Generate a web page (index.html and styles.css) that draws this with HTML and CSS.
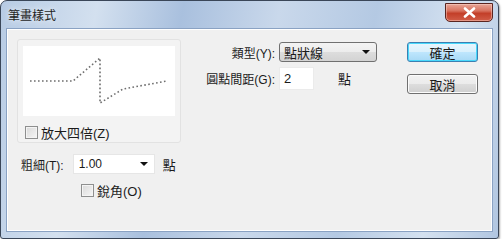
FILE: index.html
```html
<!DOCTYPE html>
<html>
<head>
    <title>筆畫樣式</title>
    <link rel="stylesheet" href="styles.css">
</head>
<body>
    <div class="window">
        <div class="titlebar">
            <span class="title">筆畫樣式</span>
            <button class="close-btn">
                <svg width="13" height="11" viewBox="0 0 13 11">
                    <path d="M2 1.5 L11 9.5 M11 1.5 L2 9.5" stroke="#fff" stroke-width="2.6" stroke-linecap="round"/>
                </svg>
            </button>
        </div>

        <div class="client">
            <!-- izquierda: vista previa y grosor -->
            <div class="left-col">
                <div class="preview-group">
                    <div class="preview-canvas">
                        <svg width="153" height="70" viewBox="0 0 153 70">
                            <polyline points="7,35 50,35 77,12 77,57 100,43 144,35"
                                fill="none" stroke="#6f6f6f" stroke-width="1.6"
                                stroke-dasharray="1.6 2.4"/>
                        </svg>
                    </div>
                    <label class="check-row">
                        <span class="checkbox"></span>放大四倍(Z)
                    </label>
                </div>

                <div class="width-row">
                    <span class="field-label">粗細(T):</span>
                    <div class="combo">
                        <span>1.00</span>
                        <span class="arrow"></span>
                    </div>
                    <span class="unit">點</span>
                </div>
                <label class="check-row sharp">
                    <span class="checkbox"></span>銳角(O)
                </label>
            </div>

            <!-- centro: tipo y distancia -->
            <div class="form-grid">
                <span class="field-label">類型(Y):</span>
                <div class="dropdown">
                    <span>點狀線</span>
                    <span class="arrow"></span>
                </div>

                <span class="field-label">圓點間距(G):</span>
                <div class="spacing">
                    <div class="text-input">2</div>
                    <span class="unit">點</span>
                </div>
            </div>

            <!-- derecha: botones -->
            <div class="buttons">
                <button class="btn default">確定</button>
                <button class="btn">取消</button>
            </div>
        </div>
    </div>
</body>
</html>
```

FILE: styles.css
```css
body {
  margin: 0;
  padding: 0;
  background-color: #fff;
  font-family: "Liberation Sans", "Noto Sans CJK TC", sans-serif;
  font-size: 12px;
  color: #1b1b1b;
}

.window {
  box-sizing: border-box;
  width: 499px;
  height: 239px;
  border: 1px solid #3a4658;
  border-radius: 7px 7px 3px 3px;
  padding: 0 6px 7px 6px;
  background: linear-gradient(100deg, #b7cbe4 0%, #d3e0ef 18%, #a9c0de 34%, #c9d8eb 52%, #b4c9e3 70%, #d4e1f0 86%, #b1c6e1 100%);
  box-shadow: 1px 1px 2px rgba(0, 0, 0, 0.35);
}

.titlebar {
  display: flex;
  align-items: flex-start;
  justify-content: space-between;
  height: 28px;
}

.title {
  margin-top: 7px;
  margin-left: 1px;
  font-size: 12px;
  line-height: 16px;
  color: #1e1e1e;
  text-shadow: 0 0 6px #fff;
}

.close-btn {
  width: 48px;
  height: 19px;
  margin-top: 2px;
  margin-right: -1px;
  padding: 0;
  border: 1px solid #5b2520;
  border-radius: 0 0 5px 5px;
  background: linear-gradient(#e7a597 0%, #d8725f 40%, #c33f29 55%, #d15d48 100%);
  display: flex;
  align-items: center;
  justify-content: center;
  box-shadow: inset 0 0 0 1px rgba(255, 220, 210, 0.45);
}

.client {
  box-sizing: border-box;
  height: 202px;
  display: flex;
  background-color: #f0f0f0;
  border: 1px solid #ffffff;
  box-shadow: 0 0 0 1px #8aa2c3;
}

.left-col {
  width: 175px;
  padding: 9px 0 0 9px;
}

.preview-group {
  box-sizing: border-box;
  width: 164px;
  height: 104px;
  padding: 6px 5px 0 5px;
  border: 1px solid #e2e2e2;
  border-radius: 3px;
  background-color: #f3f3f3;
}

.preview-canvas {
  height: 70px;
  background-color: #fff;
}

.preview-canvas svg {
  display: block;
}

.check-row {
  display: flex;
  align-items: center;
  gap: 3px;
  height: 18px;
  margin-top: 7px;
  margin-left: 2px;
  font-size: 13px;
}

.checkbox {
  box-sizing: border-box;
  width: 13px;
  height: 13px;
  border: 1px solid #8e8f8f;
  background: linear-gradient(135deg, #d9d9d9, #f6f6f6);
  box-shadow: inset 0 0 0 1px #f4f4f4;
}

.width-row {
  display: flex;
  align-items: center;
  margin-top: 11px;
  padding-left: 4px;
  height: 20px;
}

.field-label {
  font-size: 12px;
  white-space: nowrap;
}

.combo {
  box-sizing: border-box;
  width: 82px;
  height: 20px;
  margin-left: 9px;
  padding: 0 6px 0 5px;
  display: flex;
  align-items: center;
  justify-content: space-between;
  background-color: #fff;
  border: 1px solid #e6e6e6;
}

.arrow {
  width: 0;
  height: 0;
  border-left: 4px solid transparent;
  border-right: 4px solid transparent;
  border-top: 4px solid #111;
}

.unit {
  margin-left: 8px;
  font-size: 13px;
}

.sharp {
  margin-top: 7px;
  margin-left: 64px;
}

.form-grid {
  display: grid;
  grid-template-columns: 83px auto;
  grid-template-rows: 20px 23px;
  row-gap: 5px;
  column-gap: 4px;
  align-items: center;
  margin-top: 12px;
  align-self: flex-start;
}

.form-grid .field-label {
  text-align: right;
}

.dropdown {
  box-sizing: border-box;
  width: 98px;
  height: 20px;
  padding: 0 6px 0 4px;
  display: flex;
  align-items: center;
  justify-content: space-between;
  border: 1px solid #707070;
  border-radius: 3px;
  background: linear-gradient(#f3f3f3 0%, #ececec 50%, #dddddd 51%, #d3d3d3 100%);
  font-size: 13px;
}

.spacing {
  display: flex;
  align-items: center;
}

.text-input {
  box-sizing: border-box;
  width: 35px;
  height: 23px;
  padding: 3px 4px;
  background-color: #fff;
  border: 1px solid #ebebeb;
  font-size: 13px;
}

.spacing .unit {
  margin-left: 24px;
}

.buttons {
  margin-left: auto;
  margin-right: 13px;
  padding-top: 12px;
  display: flex;
  flex-direction: column;
  gap: 12px;
}

.btn {
  box-sizing: border-box;
  width: 71px;
  height: 20px;
  padding: 0;
  border: 1px solid #707070;
  border-radius: 3px;
  background: linear-gradient(#f2f2f2 0%, #ebebeb 50%, #dddddd 51%, #cfcfcf 100%);
  font-family: "Liberation Sans", "Noto Sans CJK TC", sans-serif;
  font-size: 13px;
  color: #1b1b1b;
  box-shadow: inset 0 0 0 1px #fcfcfc;
}

.btn.default {
  border-color: #3c7fb1;
  background: linear-gradient(#eaf6fd 0%, #d9f0fc 50%, #bee6fd 51%, #a7d9f5 100%);
  box-shadow: inset 0 0 0 1px #48d8fb;
}
```
